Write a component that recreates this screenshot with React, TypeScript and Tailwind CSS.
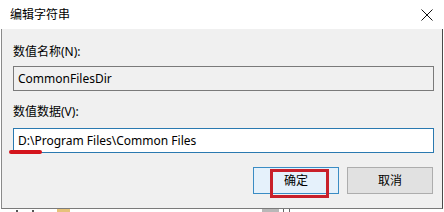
import { X } from 'lucide-react';

const cjk = { fontFamily: '"Noto Sans", "Noto Sans CJK SC", sans-serif' };

export default function App() {
  return (
    <div className="relative w-[444px] h-[212px] bg-white overflow-hidden text-black" style={cjk}>
      {/* dialog window */}
      <div className="ml-[1px] w-[442px] flex flex-col">
        <div className="h-[29px] bg-white flex items-center justify-between pl-[9px] pr-[9px]">
          <span className="text-[12px] leading-none">编辑字符串</span>
          <svg width="12" height="12" viewBox="0 0 12 12" className="mr-[1px]">
            <path d="M0.5 0.5 L11.5 11.5 M11.5 0.5 L0.5 11.5" stroke="#111" strokeWidth="1" fill="none" />
          </svg>
        </div>
        <div className="h-[180px] bg-[#f0f0f0] border-l border-r-[1px] border-b border-l-[#8a8a8a] border-r-[#4a4a4a] border-b-[#7a7a7a] pl-[11px] pr-[8px] pt-[14px] flex flex-col">
          <div className="h-[17px] flex items-center text-[12px]">数值名称(N):</div>
          <div className="mt-[6px] h-[25px] border border-[#7a7a7a] bg-[#f0f0f0] flex items-center pl-[4px] text-[12px]">
            CommonFilesDir
          </div>
          <div className="mt-[13px] h-[16px] flex items-center text-[12px]">数值数据(V):</div>
          <div className="mt-[8px] h-[25px] border border-[#2a79b0] bg-white flex items-center pl-[4px] text-[12px]">
            D:\Program Files\Common Files
          </div>
          <div className="mt-[14px] flex justify-end gap-[8px] pr-[1px]">
            <button className="w-[86px] h-[27px] bg-[#e5f1fb] border border-[#3a8cc4] text-[12px]">确定</button>
            <button className="w-[86px] h-[27px] bg-[#e1e1e1] border border-[#adadad] text-[12px]">取消</button>
          </div>
        </div>
      </div>

      {/* bits of the desktop below the dialog */}
      <div className="absolute left-[57px] top-[209px] w-[13px] h-[3px] bg-[#e6c27a]" />
      <div className="absolute left-[262px] top-[209px] w-[17px] h-[3px] bg-[#b8b8b8]" />
      <div className="absolute left-[16px] top-[210px] w-[2px] h-[2px] bg-[#555]" />
      <div className="absolute left-[32px] top-[210px] w-[2px] h-[2px] bg-[#555]" />
      <div className="absolute left-[283px] top-[209px] w-[1px] h-[3px] bg-[#666]" />
      <div className="absolute left-[289px] top-[209px] w-[1px] h-[3px] bg-[#666]" />

      {/* red annotations */}
      <div className="absolute left-[9px] top-[150px] w-[33px] h-[4px] rounded-full bg-[#d4141c]" />
      <div className="absolute left-[270px] top-[169px] w-[59px] h-[29px] border-[3px] border-[#c8202a]" />
    </div>
  );
}
